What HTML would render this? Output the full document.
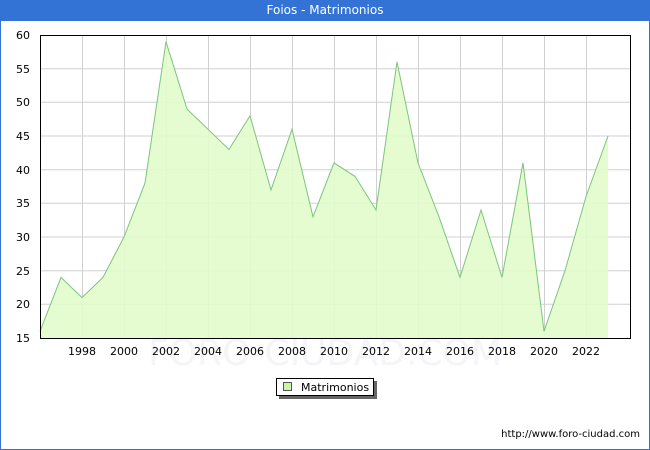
<!DOCTYPE html>
<html><head><style>
body{margin:0;width:650px;height:450px;overflow:hidden;font-family:"DejaVu Sans","Liberation Sans",sans-serif;}
.frame{position:absolute;left:0;top:0;width:648px;height:448px;border:1px solid #3473d6;background:#fff;}
.title{position:absolute;left:0;top:0;width:650px;height:21px;background:#3473d6;color:#fff;font-size:12px;text-align:center;line-height:21px;}
</style></head><body>
<div class="frame"></div>
<div class="title">Foios - Matrimonios</div>
<svg width="650" height="450" style="position:absolute;left:0;top:0" font-family="DejaVu Sans, Liberation Sans, sans-serif" font-size="11">
<text x="325" y="365" text-anchor="middle" font-size="36" fill="#f4f4f9">FORO-CIUDAD.COM</text>
<g stroke="#d0d0d0" stroke-width="1">
<line x1="40" y1="68.7" x2="630" y2="68.7"/><line x1="40" y1="102.3" x2="630" y2="102.3"/><line x1="40" y1="136" x2="630" y2="136"/><line x1="40" y1="169.7" x2="630" y2="169.7"/><line x1="40" y1="203.3" x2="630" y2="203.3"/><line x1="40" y1="237" x2="630" y2="237"/><line x1="40" y1="270.7" x2="630" y2="270.7"/><line x1="40" y1="304.3" x2="630" y2="304.3"/>
<line x1="82.5" y1="35" x2="82.5" y2="338"/><line x1="124.5" y1="35" x2="124.5" y2="338"/><line x1="166.5" y1="35" x2="166.5" y2="338"/><line x1="208.5" y1="35" x2="208.5" y2="338"/><line x1="250.5" y1="35" x2="250.5" y2="338"/><line x1="292.5" y1="35" x2="292.5" y2="338"/><line x1="334.5" y1="35" x2="334.5" y2="338"/><line x1="376.5" y1="35" x2="376.5" y2="338"/><line x1="418.5" y1="35" x2="418.5" y2="338"/><line x1="460.5" y1="35" x2="460.5" y2="338"/><line x1="502.5" y1="35" x2="502.5" y2="338"/><line x1="544.5" y1="35" x2="544.5" y2="338"/><line x1="586.5" y1="35" x2="586.5" y2="338"/>
</g>
<polygon fill="#e2fccc" fill-opacity="0.9" stroke="none" points="40,338 40,331.3 61,277.4 82,297.6 103,277.4 124,237 145,183.1 166,41.7 187,109 208,129.3 229,149.5 250,115.8 271,189.9 292,129.3 313,216.8 334,162.9 355,176.4 376,210 397,61.9 418,162.9 439,216.8 460,277.4 481,210 502,277.4 523,162.9 544,331.3 565,270.7 586,196.6 608,136 608,338"/>
<polyline fill="none" stroke="#7cc47c" stroke-width="1" points="40,331.3 61,277.4 82,297.6 103,277.4 124,237 145,183.1 166,41.7 187,109 208,129.3 229,149.5 250,115.8 271,189.9 292,129.3 313,216.8 334,162.9 355,176.4 376,210 397,61.9 418,162.9 439,216.8 460,277.4 481,210 502,277.4 523,162.9 544,331.3 565,270.7 586,196.6 608,136"/>
<rect x="40.5" y="35.5" width="590" height="303" fill="none" stroke="#000"/>
<g text-anchor="end"><text x="30" y="39">60</text><text x="30" y="73">55</text><text x="30" y="106">50</text><text x="30" y="140">45</text><text x="30" y="174">40</text><text x="30" y="207">35</text><text x="30" y="241">30</text><text x="30" y="275">25</text><text x="30" y="308">20</text><text x="30" y="342">15</text></g>
<g text-anchor="middle"><text x="82" y="355">1998</text><text x="124" y="355">2000</text><text x="166" y="355">2002</text><text x="208" y="355">2004</text><text x="250" y="355">2006</text><text x="292" y="355">2008</text><text x="334" y="355">2010</text><text x="376" y="355">2012</text><text x="418" y="355">2014</text><text x="460" y="355">2016</text><text x="502" y="355">2018</text><text x="544" y="355">2020</text><text x="586" y="355">2022</text></g>
<rect x="279" y="381" width="98" height="18" fill="#666"/>
<rect x="276.5" y="378.5" width="97" height="17" fill="#fff" stroke="#000"/>
<rect x="283.5" y="382.5" width="8" height="8" fill="#ccf5a8" stroke="#555"/>
<text x="301" y="391">Matrimonios</text>
<text x="640" y="437" text-anchor="end" font-size="10">http://www.foro-ciudad.com</text>
</svg>
</body></html>
